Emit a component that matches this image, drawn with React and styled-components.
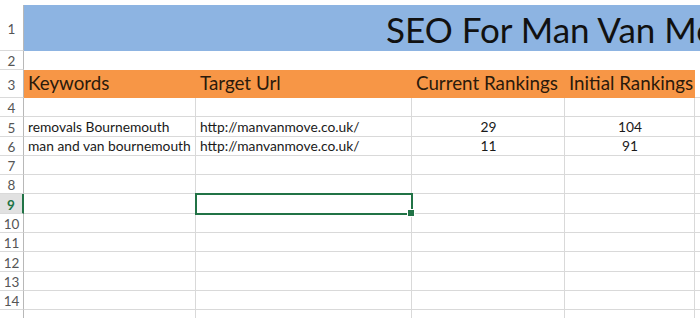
import React from "react";
import styled, { createGlobalStyle } from "styled-components";

const GlobalStyle = createGlobalStyle`
    html, body {
        margin: 0;
        padding: 0;
        background: #ffffff;
    }
    body {
        font-family: Lato, "Open Sans", sans-serif;
        overflow: hidden;
    }
`;

const COLUMNS = "24px 172px 216px 153px 130px 1fr";

const Sheet = styled.div`
    padding-top: 5px;
    width: 700px;
    height: 318px;
    overflow: hidden;
    box-sizing: border-box;
`;

const Row = styled.div`
    display: grid;
    grid-template-columns: ${COLUMNS};
    height: ${props => props.h}px;
`;

const RowHeader = styled.div`
    box-sizing: border-box;
    display: flex;
    align-items: center;
    justify-content: center;
    border-right: ${props => (props.active ? "2px solid #217346" : "1px solid #b8b8b8")};
    border-bottom: 1px solid #dadada;
    background: ${props => (props.active ? "#e1e1e1" : "#ffffff")};
    color: ${props => (props.active ? "#217346" : "#555555")};
    font-weight: ${props => (props.active ? 700 : 400)};
    font-size: 13.5px;
    padding-top: 2px;
`;

const Cell = styled.div`
    box-sizing: border-box;
    position: relative;
    display: flex;
    align-items: flex-end;
    justify-content: ${props => (props.center ? "center" : "flex-start")};
    padding: 0 3px 1px 4px;
    border-right: 1px solid ${props => (props.fill ? props.fill : "#d9d9d9")};
    border-bottom: 1px solid ${props => (props.fill ? props.fill : "#d9d9d9")};
    background: ${props => props.fill || "transparent"};
    font-size: 13.8px;
    line-height: 17px;
    color: #1a1a1a;
    white-space: nowrap;
`;

const BlankCell = styled.div`
    grid-column: span 5;
    background: #ffffff;
`;

const TitleCell = styled.div`
    grid-column: span 5;
    background: #8db4e2;
    display: flex;
    align-items: flex-end;
    padding-left: 362px;
    font-size: 35px;
    line-height: 43px;
    color: #111111;
    white-space: nowrap;
    overflow: hidden;
`;

const HeadCell = styled(Cell)`
    font-size: 18.8px;
    line-height: 24px;
    color: #2b1a0c;
    padding-left: 4px;
    padding-bottom: 2px;
`;

const Selected = styled(Cell)`
    outline: 2px solid #217346;
    outline-offset: -1px;
    z-index: 2;

    &::after {
        content: "";
        position: absolute;
        right: -4px;
        bottom: -4px;
        width: 6px;
        height: 6px;
        background: #217346;
        border: 1px solid #ffffff;
    }
`;

const data = [
    { kw: "removals Bournemouth", url: "http://manvanmove.co.uk/", cur: 29, init: 104 },
    { kw: "man and van bournemouth", url: "http://manvanmove.co.uk/", cur: 11, init: 91 },
];

const emptyRows = [
    { n: 7, h: 19 },
    { n: 8, h: 19 },
    { n: 9, h: 20, active: true },
    { n: 10, h: 19 },
    { n: 11, h: 19 },
    { n: 12, h: 20 },
    { n: 13, h: 19 },
    { n: 14, h: 19 },
    { n: "", h: 20 },
];

export default function App() {
    return (
        <>
            <GlobalStyle />
            <Sheet>
                <Row h={46}>
                    <RowHeader>1</RowHeader>
                    <TitleCell>SEO For Man Van Move</TitleCell>
                </Row>
                <Row h={19}>
                    <RowHeader>2</RowHeader>
                    <BlankCell />
                </Row>
                <Row h={28}>
                    <RowHeader>3</RowHeader>
                    <HeadCell fill="#f79646">Keywords</HeadCell>
                    <HeadCell fill="#f79646">Target Url</HeadCell>
                    <HeadCell fill="#f79646">Current Rankings</HeadCell>
                    <HeadCell fill="#f79646">Initial Rankings</HeadCell>
                    <Cell />
                </Row>
                <Row h={19}>
                    <RowHeader>4</RowHeader>
                    <Cell /><Cell /><Cell /><Cell /><Cell />
                </Row>
                {data.map((d, i) => (
                    <Row h={i === 0 ? 20 : 19} key={d.kw}>
                        <RowHeader>{5 + i}</RowHeader>
                        <Cell>{d.kw}</Cell>
                        <Cell>{d.url}</Cell>
                        <Cell center>{d.cur}</Cell>
                        <Cell center>{d.init}</Cell>
                        <Cell />
                    </Row>
                ))}
                {emptyRows.map((r, i) => (
                    <Row h={r.h} key={i}>
                        <RowHeader active={r.active}>{r.n}</RowHeader>
                        <Cell />
                        {r.active ? <Selected /> : <Cell />}
                        <Cell /><Cell /><Cell />
                    </Row>
                ))}
            </Sheet>
        </>
    );
}
